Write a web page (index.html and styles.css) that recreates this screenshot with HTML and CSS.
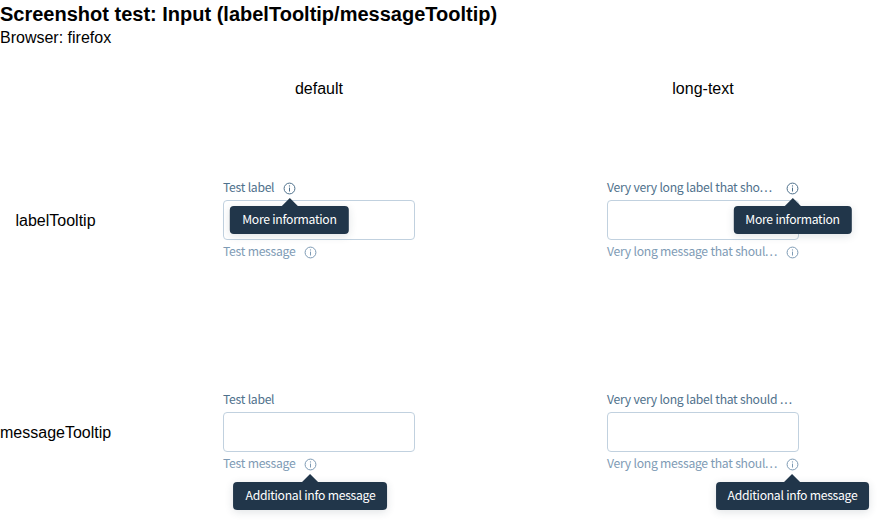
FILE: index.html
```html
<!DOCTYPE html>
<html lang="en">
<head>
<meta charset="utf-8">
<title>Input (labelTooltip/messageTooltip)</title>
<link rel="stylesheet" href="styles.css">
</head>
<body>
<svg class="sprite" width="0" height="0" aria-hidden="true">
  <symbol id="info" viewBox="0 0 13 13">
    <circle cx="6.5" cy="6.5" r="5.4" fill="none" stroke="currentColor"/>
    <path d="M6.5 5.6V9.5" fill="none" stroke="currentColor"/>
    <circle cx="6.5" cy="3.9" r=".65" fill="currentColor"/>
  </symbol>
</svg>
<h1 class="title">Screenshot test: Input (labelTooltip/messageTooltip)</h1>
<p class="browser">Browser: firefox</p>
<main class="matrix">
  <div></div>
  <div class="heading">default</div>
  <div class="heading">long-text</div>

  <div class="row-name">labelTooltip</div>
  <section class="cell">
    <div class="line label"><span class="text">Test label</span><span class="info"><svg><use href="#info"/></svg><span class="tooltip">More information</span></span></div>
    <div class="input"></div>
    <div class="line message"><span class="text">Test message</span><span class="info"><svg><use href="#info"/></svg></span></div>
  </section>
  <section class="cell">
    <div class="line label"><span class="text">Very very long label that sho<span class="dots">...</span></span><span class="info end"><svg><use href="#info"/></svg><span class="tooltip">More information</span></span></div>
    <div class="input"></div>
    <div class="line message"><span class="text">Very long message that shoul<span class="dots">...</span></span><span class="info end"><svg><use href="#info"/></svg></span></div>
  </section>

  <div class="row-name">messageTooltip</div>
  <section class="cell">
    <div class="line label"><span class="text">Test label</span></div>
    <div class="input"></div>
    <div class="line message"><span class="text">Test message</span><span class="info"><svg><use href="#info"/></svg><span class="tooltip">Additional info message</span></span></div>
  </section>
  <section class="cell">
    <div class="line label"><span class="text">Very very long label that should <span class="dots">...</span></span></div>
    <div class="input"></div>
    <div class="line message"><span class="text">Very long message that shoul<span class="dots">...</span></span><span class="info end"><svg><use href="#info"/></svg><span class="tooltip">Additional info message</span></span></div>
  </section>
</main>
</body>
</html>
```
FILE: styles.css
```css
html { overflow: hidden; }
body {
  margin: 0;
  height: 522px;
  overflow: hidden;
  background: #fff;
  color: #000;
  font: 16px/18px "Liberation Sans", Arial, sans-serif;
}
.sprite { position: absolute; }
.title { margin: 0; padding-top: 3px; font-size: 20px; line-height: 23px; }
.browser { margin: 3px 0 0; }
.matrix {
  display: grid;
  grid-template-columns: 127px 384px 384px;
  grid-template-rows: 34px 212px 212px;
  padding-top: 33px;
}
.heading { text-align: center; }
.row-name { width: 111px; padding-top: 2px; align-self: center; text-align: center; }
.cell {
  padding: 64px 96px;
  font-family: "Noto Sans CJK SC", "Noto Sans", sans-serif;
  font-size: 12.2px;
  letter-spacing: -.29px;
  word-spacing: .2px;
}
.line { display: flex; height: 20px; line-height: 18px; white-space: nowrap; }
.label { color: #4f718c; margin-bottom: 2px; }
.message { color: #7e9bb5; margin-top: 2px; }
.dots { letter-spacing: 1.1px; }
.input {
  box-sizing: border-box;
  height: 40px;
  border: 1px solid #c1d1df;
  border-radius: 4px;
  background: #fff;
}
.info { position: relative; display: block; width: 13px; height: 20px; margin-left: 8.6px; }
.end { margin-left: auto; }
.info svg { display: block; width: 13px; height: 13px; margin-top: 4px; }
.tooltip {
  position: absolute;
  z-index: 1;
  top: 28px;
  left: 50%;
  transform: translateX(-50%);
  box-sizing: border-box;
  height: 28px;
  padding: 4px 12px;
  border-radius: 4px;
  background: #21364a;
  color: #fff;
  box-shadow: 0 2px 8px rgba(33, 54, 74, .14);
}
.tooltip::before {
  content: "";
  position: absolute;
  top: -8px;
  left: 50%;
  margin-left: -8px;
  border: 8px solid transparent;
  border-top: 0;
  border-bottom-color: #21364a;
}
```
